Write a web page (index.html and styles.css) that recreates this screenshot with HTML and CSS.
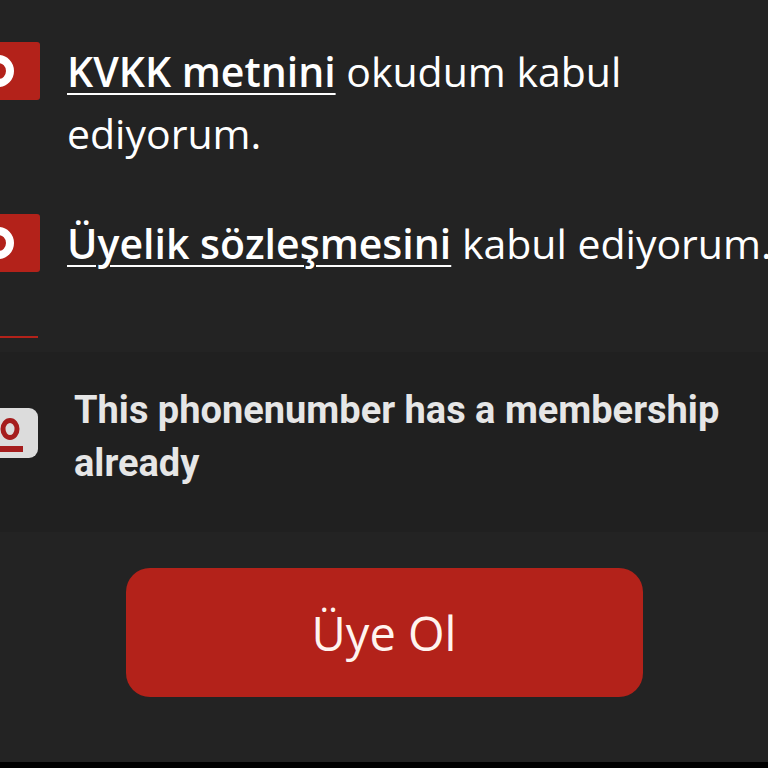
FILE: index.html
```html
<!DOCTYPE html>
<html lang="tr">
<head>
<meta charset="utf-8">
<title>Üye Ol</title>
<link rel="stylesheet" href="styles.css">
</head>
<body>
<main class="screen">
  <section class="terms">
    <div class="check-row">
      <span class="checkbox"><span class="ring"></span></span>
      <p class="check-text"><a class="link" href="#">KVKK metnini</a> okudum kabul ediyorum.</p>
    </div>
    <div class="check-row">
      <span class="checkbox"><span class="ring"></span></span>
      <p class="check-text"><a class="link" href="#">Üyelik sözleşmesini</a> kabul ediyorum.</p>
    </div>
  </section>
  <div class="divider"></div>
  <div class="toast">
    <span class="app-icon">
      <svg width="40" height="50" viewBox="0 0 40 50">
        <rect x="-10" y="0" width="48" height="50" rx="9" fill="#dcdcdc"/>
        <ellipse cx="10" cy="21" rx="7" ry="8.5" fill="none" stroke="#a51d1d" stroke-width="5"/>
        <rect x="0" y="38" width="23" height="6" fill="#a51d1d"/>
      </svg>
    </span>
    <p class="toast-text">This phonenumber has a membership already</p>
  </div>
  <div class="actions">
    <button class="primary" type="button">Üye Ol</button>
  </div>
  <div class="navbar"></div>
</main>
</body>
</html>
```

FILE: styles.css
```css
html, body {
  margin: 0;
  padding: 0;
  background: #232323;
  overflow: hidden;
}

.screen {
  width: 768px;
  height: 768px;
  display: flex;
  flex-direction: column;
  overflow: hidden;
  font-family: "Open Sans", "Noto Sans", sans-serif;
}

.terms {
  display: flex;
  flex-direction: column;
  gap: 48px;
  padding-top: 40px;
}

.check-row {
  display: flex;
  align-items: flex-start;
  gap: 27px;
  margin-left: -18px;
}

.checkbox {
  flex: none;
  width: 58px;
  height: 58px;
  margin-top: 2px;
  background: #b3221a;
  border-radius: 3px;
  display: flex;
  align-items: center;
  justify-content: flex-start;
  padding-left: 1px;
  box-sizing: border-box;
}

.ring {
  width: 15px;
  height: 16px;
  border: 8px solid #ffffff;
  border-radius: 50%;
}

.check-text {
  margin: 0;
  width: 725px;
  flex: none;
  color: #ffffff;
  font-size: 41px;
  line-height: 62px;
  font-weight: 400;
}

.link {
  color: #ffffff;
  font-weight: 600;
  text-decoration: underline;
  text-decoration-thickness: 2px;
  text-underline-offset: 6px;
}

.divider {
  width: 38px;
  height: 2px;
  background: #b3221a;
  margin-top: 62px;
}

.toast {
  margin-top: 14px;
  padding: 32px 0 42px;
  background: #202020;
  display: flex;
  align-items: center;
  gap: 34px;
}

.app-icon {
  flex: none;
  width: 40px;
  height: 50px;
  display: block;
  margin-top: -8px;
}

.app-icon svg {
  display: block;
}

.toast-text {
  margin: 0;
  width: 660px;
  color: #e6e6e6;
  font-family: Roboto, "Noto Sans", sans-serif;
  font-weight: 700;
  font-size: 38px;
  line-height: 53px;
}

.actions {
  display: flex;
  justify-content: center;
  padding-top: 36px;
}

.primary {
  width: 517px;
  height: 129px;
  border: none;
  border-radius: 24px;
  background: #b3221a;
  color: #fff4ef;
  font-family: "Open Sans", "Noto Sans", sans-serif;
  font-size: 47px;
  font-weight: 400;
  padding: 0;
}

.navbar {
  margin-top: auto;
  height: 6px;
  background: #000000;
}
```
